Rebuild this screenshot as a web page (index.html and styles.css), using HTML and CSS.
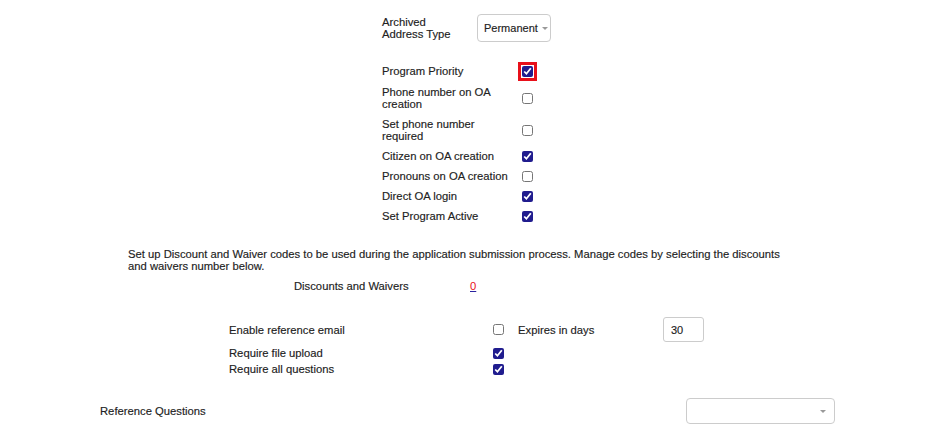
FILE: index.html
```html
<!DOCTYPE html>
<html lang="en">
<head>
    <meta charset="UTF-8">
    <meta name="viewport" content="width=device-width, initial-scale=1.0">
    <title>Program Settings</title>
    <link rel="stylesheet" href="styles.css">
</head>
<body>

    <div class="program-block">
        <div class="archived-row">
            <label>Archived<br>Address Type</label>
            <button class="dropdown dropdown-small">Permanent <span class="caret"></span></button>
        </div>

        <div class="option-list">
            <div class="option-row option-first">
                <label for="opt-priority">Program Priority</label>
                <span class="highlight"><input type="checkbox" id="opt-priority" checked></span>
            </div>
            <div class="option-row option-double">
                <label for="opt-phone">Phone number on OA creation</label>
                <input type="checkbox" id="opt-phone">
            </div>
            <div class="option-row option-double">
                <label for="opt-phone-req">Set phone number required</label>
                <input type="checkbox" id="opt-phone-req">
            </div>
            <div class="option-row">
                <label for="opt-citizen">Citizen on OA creation</label>
                <input type="checkbox" id="opt-citizen" checked>
            </div>
            <div class="option-row">
                <label for="opt-pronouns">Pronouns on OA creation</label>
                <input type="checkbox" id="opt-pronouns">
            </div>
            <div class="option-row">
                <label for="opt-direct">Direct OA login</label>
                <input type="checkbox" id="opt-direct" checked>
            </div>
            <div class="option-row">
                <label for="opt-active">Set Program Active</label>
                <input type="checkbox" id="opt-active" checked>
            </div>
        </div>
    </div>

    <p class="discount-note">Set up Discount and Waiver codes to be used during the application submission process. Manage codes by selecting the discounts and waivers number below.</p>

    <div class="discount-row">
        <span>Discounts and Waivers</span>
        <a href="#" class="count-link">0</a>
    </div>

    <div class="reference-block">
        <div class="reference-row reference-first">
            <label for="ref-email">Enable reference email</label>
            <input type="checkbox" id="ref-email">
            <label for="ref-days">Expires in days</label>
            <input type="text" id="ref-days" class="days-input" value="30">
        </div>
        <div class="reference-row">
            <label for="ref-file">Require file upload</label>
            <input type="checkbox" id="ref-file" checked>
        </div>
        <div class="reference-row">
            <label for="ref-all">Require all questions</label>
            <input type="checkbox" id="ref-all" checked>
        </div>
    </div>

    <div class="questions-row">
        <span>Reference Questions</span>
        <button class="dropdown dropdown-wide"><span class="caret"></span></button>
    </div>

</body>
</html>
```

FILE: styles.css
```css
body {
    margin: 0;
    font-family: "Liberation Sans", Arial, sans-serif;
    font-size: 11.25px;
    line-height: 12px;
    color: #222;
    background-color: white;
    -webkit-text-stroke: 0.15px #222;
}
input[type="checkbox"] {
    width: 11px;
    height: 11px;
    margin: 0;
    accent-color: #201c8e;
}
.program-block {
    margin-left: 382px;
    padding-top: 14px;
}
.archived-row {
    display: grid;
    grid-template-columns: 95px auto;
    align-items: center;
    height: 28px;
}
.dropdown {
    display: flex;
    align-items: center;
    font-family: "Liberation Sans", Arial, sans-serif;
    font-size: 11px;
    color: #222;
    background-color: white;
    border: 1px solid #ccc;
    border-radius: 4px;
    padding: 0 6px;
    cursor: pointer;
}
.dropdown-small {
    width: 74px;
    height: 28px;
    gap: 4px;
}
.dropdown-wide {
    width: 149px;
    height: 26px;
    justify-content: flex-end;
    padding-right: 8px;
}
.caret {
    width: 0;
    height: 0;
    border-left: 3px solid transparent;
    border-right: 3px solid transparent;
    border-top: 3px solid #999;
}
.option-list {
    margin-top: 18px;
}
.option-row {
    display: grid;
    grid-template-columns: 136px auto;
    align-items: center;
    min-height: 20px;
}
.option-row input {
    margin-left: 4px;
}
.option-first {
    min-height: 22px;
}
.option-double {
    min-height: 32px;
}
.option-row label {
    width: 132px;
}
.highlight {
    display: flex;
}
.highlight input {
    outline: 3px solid #e8101a;
    outline-offset: 1px;
}
.discount-note {
    margin: 22px 0 0 128px;
    width: 664px;
}
.discount-row {
    display: grid;
    grid-template-columns: 176px auto;
    margin: 8px 0 0 294px;
}
.count-link {
    color: #e8101a;
    -webkit-text-stroke: 0;
    text-decoration: underline;
    text-decoration-color: #2a22a0;
}
.reference-block {
    margin: 25px 0 0 229px;
}
.reference-row {
    display: grid;
    grid-template-columns: 264px 25px 145px auto;
    align-items: center;
    height: 16px;
}
.reference-first {
    height: 25px;
    margin-bottom: 3px;
}
.days-input {
    width: 41px;
    height: 25px;
    box-sizing: border-box;
    border: 1px solid #ccc;
    border-radius: 3px;
    padding: 0 7px;
    font-family: "Liberation Sans", Arial, sans-serif;
    font-size: 11px;
    color: #222;
}
.questions-row {
    display: grid;
    grid-template-columns: 586px 149px;
    align-items: center;
    margin: 21px 0 0 100px;
}
```
